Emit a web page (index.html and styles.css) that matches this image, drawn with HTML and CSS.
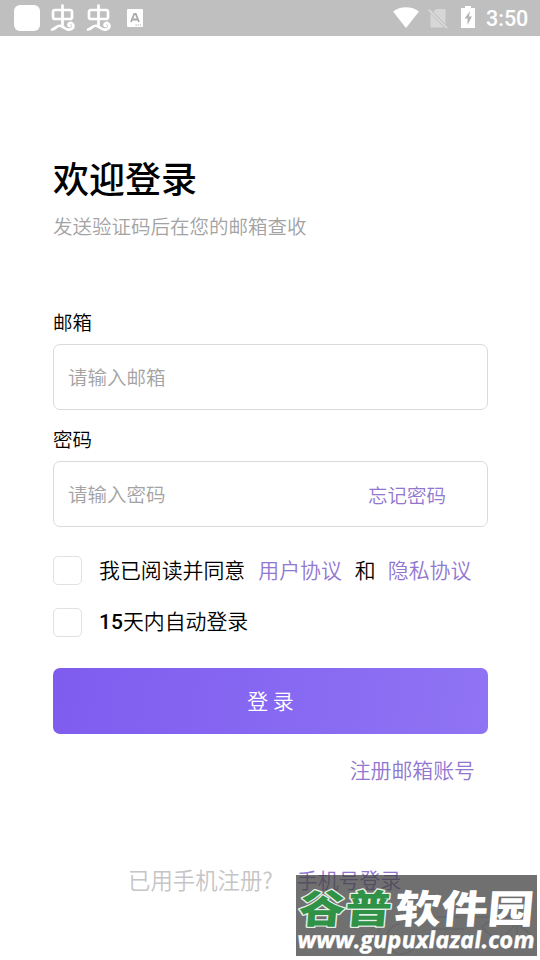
FILE: index.html
```html
<!DOCTYPE html>
<html lang="zh-CN">
<head>
<meta charset="utf-8">
<title>欢迎登录</title>
<link rel="stylesheet" href="styles.css">
</head>
<body>
<header class="status">
  <div class="status-left">
    <span class="app-dot"></span>
    <svg class="bug" viewBox="0 0 26 28"><use href="#bug"/></svg>
    <svg class="bug" viewBox="0 0 26 28"><use href="#bug"/></svg>
    <svg class="lang" viewBox="0 0 16 18"><rect width="16" height="18" rx="1" fill="#fff"/><path d="M4 13 7.2 5h1.6L12 13M5.4 10.5h5.2" fill="none" stroke="#aaa" stroke-width="1.8"/><path d="M8.5 16h1.2m1 0h1.2m1 0h1.2" stroke="#aaa" stroke-width="1.2"/></svg>
  </div>
  <div class="status-right">
    <svg class="wifi" viewBox="0 0 26 21"><path d="M0 4.5C7-1.3 19-1.3 26 4.5L13 21Z" fill="#fff"/></svg>
    <svg class="sim" viewBox="0 0 20 21"><path d="M8 1h9.500v15L5.500 4ZM2.500 5.500 16 19.500H2.500Z" fill="#d7d7d7"/><path d="M.8 1.800 19 20" stroke="#d7d7d7" stroke-width="2"/></svg>
    <svg class="battery" viewBox="0 0 14 22"><path d="M4 0h6v2h4v20H0V2h4Z" fill="#fff"/><path d="M9 5 3.500 12.500h3V19L11 10.500H8Z" fill="#b4b4b4"/></svg>
    <span class="clock">3:50</span>
  </div>
</header>
<svg class="defs" aria-hidden="true"><defs><g id="bug" fill="none" stroke="#fff" stroke-width="2.700" stroke-linecap="round" stroke-linejoin="round"><path d="M12.500 1.500V21M5 6h15q2 0 2 2v5q0 2-2 2H5q-2 0-2-2V8q0-2 2-2Z"/><path d="M2 25.500C6 25 7 20.500 11 22s5 4.500 9 3.500c5-1 4-7 0-6.500-2 .5-2 3 0 3"/></g></defs></svg>

<main class="page">
  <h1>欢迎登录</h1>
  <p class="subtitle">发送验证码后在您的邮箱查收</p>
  <form>
    <label class="label">邮箱</label>
    <div class="field"><span>请输入邮箱</span></div>
    <label class="label second">密码</label>
    <div class="field"><span>请输入密码</span><a class="forgot">忘记密码</a></div>
    <div class="check"><i class="box"></i><span>我已阅读并同意</span><a>用户协议</a><span class="and">和</span><a>隐私协议</a></div>
    <div class="check auto"><i class="box"></i><span><b>15</b>天内自动登录</span></div>
    <div class="submit">登 录</div>
  </form>
  <a class="register">注册邮箱账号</a>
</main>
<footer class="phone"><span>已用手机注册?</span><a>手机号登录</a></footer>

<svg class="watermark" viewBox="0 0 241 81">
  <rect class="shade" width="241" height="81"/>
  <path class="ghost" d="M83 58v-10h8M104 49a15 15 0 1 0 14 23M140 42h24M136 54h32M174 42h24l-12 10 12 12M207 42h28M221 42v26M209 60l12-12 14 12"/>
  <g class="brand" transform="skewX(-5)">
    <text class="green" x="6" y="48" textLength="93" lengthAdjust="spacingAndGlyphs">谷普</text>
    <text class="white" x="102" y="48" textLength="139" lengthAdjust="spacingAndGlyphs">软件园</text>
  </g>
  <text class="url" transform="skewX(4)" x="-3" y="73" textLength="237" lengthAdjust="spacingAndGlyphs">www.gupuxlazal.com</text>
</svg>
</body>
</html>
```
FILE: styles.css
```css
* { box-sizing: border-box; }
body {
  margin: 0;
  position: relative;
  width: 540px;
  height: 960px;
  overflow: hidden;
  background: #fff;
  color: #000;
  font-family: "Noto Sans CJK SC", sans-serif;
  font-size: 19.5px;
  font-weight: 350;
}
a { color: #9177d0; }
.defs { position: absolute; width: 0; height: 0; }
.status {
  height: 36px;
  padding: 0 12px 0 14px;
  background: #bfbfbf;
  display: flex;
  justify-content: space-between;
}
.status-left, .status-right { display: flex; align-items: center; }
.app-dot { width: 26px; height: 26px; border-radius: 6px; background: #fff; }
.bug { width: 26px; height: 28px; margin-left: 10px; }
.lang { width: 16px; height: 18px; margin-left: 15px; }
.wifi { width: 26px; height: 21px; margin-bottom: 2px; }
.sim { width: 20px; height: 21px; margin-left: 9px; }
.battery { width: 14px; height: 22px; margin: 0 11px 2px 13px; }
.clock { font: 500 21.5px/36px Roboto, sans-serif; color: #fff; padding-top: 2px; width: 42px; white-space: nowrap; }

.page { padding: 116px 52px 0 53px; display: flex; flex-direction: column; }
h1 { margin: 0; font-size: 36px; line-height: 50px; font-weight: 500; }
.subtitle { margin: 9px 0 0; line-height: 30px; color: #a3a3a3; }
.label { display: block; margin-top: 66px; line-height: 30px; }
.label.second { margin-top: 14px; }
.field {
  height: 66px;
  margin-top: 7px;
  padding: 0 41px 2px 14px;
  border: 1.5px solid #dadada;
  border-radius: 7px;
  display: flex;
  justify-content: space-between;
  align-items: center;
  color: #a3a3a3;
}
.forgot { padding-top: 2px; }
.check { margin-top: 28px; height: 30px; display: flex; align-items: center; font-size: 20.9px; line-height: 28px; white-space: nowrap; }
.check > span, .check > a { padding-bottom: 2px; }
.check.auto { margin-top: 22px; }
.box { width: 29px; height: 29px; border: 1.5px solid #e1e1e1; border-radius: 5px; margin-right: 17px; }
.check a { margin-left: 13px; }
.check .and { margin-left: 13px; margin-right: -1px; }
.check b { font-family: Roboto, sans-serif; font-weight: 500; font-size: 21px; }
.submit {
  height: 66px;
  margin-top: 31px;
  border-radius: 7px;
  background: linear-gradient(100deg, #7f5cef, #8f74f4);
  color: #fff;
  font-size: 21px;
  line-height: 64px;
  text-align: center;
}
.register { align-self: flex-end; margin: 20px 13px 0 0; font-size: 20.9px; line-height: 30px; }
.phone { display: flex; align-items: center; margin: 80px 0 0 128px; height: 30px; font-size: 22.4px; color: #c5c5c5; }
.phone a { font-size: 20.9px; margin-left: 24px; }

.watermark { position: absolute; left: 296px; top: 875px; width: 241px; height: 81px; }
.shade { fill: rgb(64, 64, 64); fill-opacity: .75; }
.ghost { fill: none; stroke: #676767; stroke-width: 1.5; }
.brand text { font-size: 39px; font-weight: 900; paint-order: stroke; stroke-linejoin: round; }
.green { fill: #2f9246; stroke: #e8efe8; stroke-width: 2.5px; }
.white { fill: #fff; }
.url { font-family: "Open Sans", "Noto Sans", sans-serif; font-size: 23px; font-weight: 700; font-style: italic; fill: #fff; stroke: #fff; stroke-width: .4px; }
```
